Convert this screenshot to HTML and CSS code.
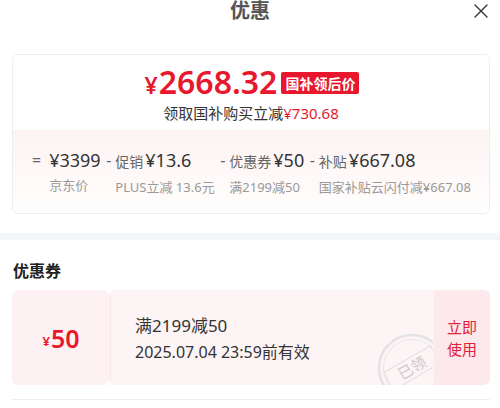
FILE: index.html
```html
<!DOCTYPE html>
<html lang="zh-CN">
  <head>
    <meta charset="UTF-8" />
    <meta name="viewport" content="width=device-width, initial-scale=1.0" />
    <title>优惠</title>
    <link rel="stylesheet" href="styles.css">
  </head>
  <body>
    <header class="sheet-head">
      <span></span>
      <h1>优惠</h1>
      <button class="close" aria-label="关闭">
        <svg width="14" height="14" viewBox="0 0 14 14"><path d="M1 1L13 13M13 1L1 13" stroke="#333" stroke-width="1.4" stroke-linecap="round"/></svg>
      </button>
    </header>

    <section class="price-card">
      <div class="price-top">
        <div class="final">
          <span class="final-num"><small>¥</small>2668.32</span>
          <span class="final-tag">国补领后价</span>
        </div>
        <p class="saving">领取国补购买立减<em>¥730.68</em></p>
      </div>
      <div class="calc">
        <div class="term">
          <span class="op op-eq">=</span>
          <div>
            <div class="tval">¥3399</div>
            <div class="tdesc">京东价</div>
          </div>
        </div>
        <div class="term">
          <span class="op">-</span>
          <div>
            <div class="tval"><span class="tlabel">促销</span>¥13.6</div>
            <div class="tdesc">PLUS立减 13.6元</div>
          </div>
        </div>
        <div class="term">
          <span class="op">-</span>
          <div>
            <div class="tval"><span class="tlabel">优惠券</span>¥50</div>
            <div class="tdesc">满2199减50</div>
          </div>
        </div>
        <div class="term">
          <span class="op">-</span>
          <div>
            <div class="tval"><span class="tlabel">补贴</span>¥667.08</div>
            <div class="tdesc">国家补贴云闪付减¥667.08</div>
          </div>
        </div>
      </div>
    </section>

    <div class="band"></div>

    <h2 class="sec-title">优惠券</h2>

    <div class="coupon">
      <div class="coupon-amt"><small>¥</small>50</div>
      <div class="coupon-body">
        <div class="coupon-rule">满2199减50</div>
        <div class="coupon-date">2025.07.04 23:59前有效</div>
        <svg class="stamp" width="56" height="52" viewBox="0 0 56 52">
          <circle cx="35" cy="35" r="33" fill="none" stroke="#e3e3e3" stroke-width="2.5"/>
          <circle cx="35" cy="35" r="28.5" fill="none" stroke="#e6e6e6" stroke-width="1"/>
          <g transform="rotate(-30 35 35)">
            <rect x="8" y="25" width="54" height="20" fill="none" stroke="#e3e3e3" stroke-width="1.2"/>
            <text x="35" y="40.5" text-anchor="middle" font-size="15" fill="#c9c9c9" font-family="Noto Sans CJK SC, sans-serif">已领</text>
          </g>
        </svg>
      </div>
      <div class="coupon-use">立即<br>使用</div>
    </div>

    <div class="next-coupon"></div>
  </body>
</html>
```

FILE: styles.css
```css
* {
  box-sizing: border-box;
}

body {
  margin: 0;
  background: #fff;
  font-family: "Noto Sans", "Noto Sans CJK SC", sans-serif;
  color: #333;
}

.sheet-head {
  display: grid;
  grid-template-columns: 1fr auto 1fr;
  align-items: start;
  height: 20px;
}

.sheet-head h1 {
  margin: 0;
  font-size: 20px;
  line-height: 21px;
  font-weight: 700;
  color: #555;
}

.close {
  justify-self: end;
  margin: 4px 12px 0 0;
  padding: 0;
  border: 0;
  background: none;
  width: 14px;
  height: 14px;
  display: flex;
}

.price-card {
  margin: 34px 10px 0 12px;
  border: 1px solid #eee;
  border-radius: 6px;
  overflow: hidden;
}

.price-top {
  padding: 13px 0 7px;
  text-align: center;
}

.final {
  display: flex;
  justify-content: center;
  align-items: center;
  gap: 4px;
  height: 30px;
  padding-left: 2px;
}

.final-num {
  color: #e8172e;
  font-size: 32px;
  font-weight: 600;
  line-height: 30px;
}

.final-num small {
  font-size: 23px;
  margin-right: 1px;
}

.final-tag {
  background: #e8172e;
  color: #fff;
  font-size: 14px;
  font-weight: 700;
  line-height: 22px;
  height: 22px;
  padding: 0 4px;
  border-radius: 2px;
  font-family: "Noto Sans CJK SC", sans-serif;
}

.saving {
  margin: 5px 0 0;
  font-size: 15px;
  line-height: 20px;
  color: #333;
}

.saving em {
  font-style: normal;
  color: #e8172e;
}

.calc {
  display: flex;
  justify-content: space-between;
  padding: 18px 18px 17px 19px;
  background: linear-gradient(#fdf3f3, #fffafa 70%, #fff);
}

.term {
  display: flex;
  align-items: flex-start;
}

.op {
  font-size: 16px;
  line-height: 24px;
  color: #666;
  margin-right: 4px;
}

.op-eq {
  margin-right: 8px;
}

.tval {
  font-size: 18px;
  line-height: 24px;
  color: #333;
  white-space: nowrap;
}

.tlabel {
  font-size: 14px;
  color: #666;
  margin-right: 2px;
}

.tdesc {
  margin-top: 4px;
  font-size: 13px;
  line-height: 18px;
  color: #999;
  white-space: nowrap;
}

.band {
  margin-top: 19px;
  height: 7px;
  background: #f5f6fa;
}

.sec-title {
  margin: 21px 0 0 13px;
  font-size: 16px;
  line-height: 20px;
  font-weight: 700;
  color: #222;
}

.coupon {
  display: flex;
  margin: 9px 10px 0 12px;
  height: 95px;
  border-radius: 6px;
  overflow: hidden;
  position: relative;
}

.coupon-amt {
  width: 99px;
  display: flex;
  align-items: center;
  justify-content: center;
  background: #fdf1f3;
  color: #e8172e;
  font-size: 25px;
  font-weight: 600;
  border-right: 1px solid #f8e6ea;
  position: relative;
}

.coupon-amt small {
  font-size: 13px;
  margin-top: 6px;
  margin-right: 1px;
}

.coupon-amt::before,
.coupon-amt::after {
  content: "";
  position: absolute;
  right: -5px;
  width: 9px;
  height: 9px;
  border-radius: 50%;
  background: #fff;
}

.coupon-amt::before {
  top: -5px;
}

.coupon-amt::after {
  bottom: -5px;
}

.coupon-body {
  flex: 1;
  background: #fdf4f6;
  padding: 25px 0 0 24px;
  position: relative;
  overflow: hidden;
}

.coupon-rule {
  font-size: 17px;
  line-height: 22px;
  color: #333;
}

.coupon-date {
  margin-top: 4px;
  font-size: 16px;
  line-height: 22px;
  color: #333;
}

.stamp {
  position: absolute;
  left: 266px;
  top: 43px;
}

.coupon-use {
  width: 56px;
  display: flex;
  align-items: center;
  justify-content: center;
  text-align: center;
  background: #fde8ec;
  color: #e0213c;
  font-size: 15px;
  line-height: 22px;
  font-family: "Noto Sans CJK SC", sans-serif;
}

.next-coupon {
  margin: 14px 10px 0 12px;
  border-top: 1px solid #eee;
}
```
